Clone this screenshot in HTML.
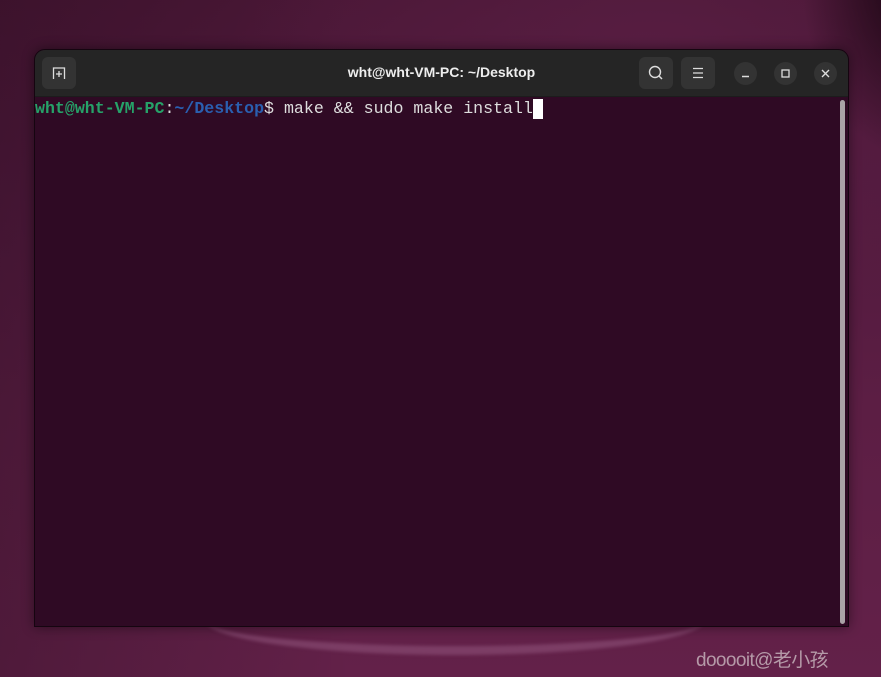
<!DOCTYPE html>
<html><head><meta charset="utf-8"><style>
*{margin:0;padding:0;box-sizing:border-box}
body{width:881px;height:677px;overflow:hidden;position:relative;font-family:"Liberation Sans",sans-serif;
background:linear-gradient(180deg,#4a1736 0%,#521a3e 30%,#5c1e44 60%,#632149 100%)}
.tint{position:absolute;inset:0;background:radial-gradient(ellipse 600px 400px at 650px 60px,rgba(110,40,85,.35),rgba(0,0,0,0) 70%),linear-gradient(90deg,rgba(20,5,15,.25),rgba(0,0,0,0) 40%)}
.glow{position:absolute;left:205px;top:585px;width:500px;height:70px;border-radius:50%;border-bottom:9px solid rgba(150,90,130,.5);filter:blur(1.5px)}
.dark{position:absolute;right:-60px;top:-40px;width:140px;height:200px;background:radial-gradient(ellipse at 80% 10%,#1a0612,rgba(30,8,20,0) 70%)}
.win{position:absolute;left:34px;top:49px;width:815px;height:578px;border-radius:11px 11px 0 0;background:#2f0a24;box-shadow:0 0 12px rgba(0,0,0,.45);overflow:hidden;border:1px solid #150510}
.tb{position:absolute;left:0;top:0;width:100%;height:47px;background:#252525;border-bottom:1px solid #1c1c1c}
.btn{position:absolute;top:7px;width:34px;height:32px;border-radius:6px;background:#333}
.circ{position:absolute;top:12px;width:23px;height:23px;border-radius:50%;background:#333}
.title{position:absolute;left:0;width:100%;top:14px;text-align:center;color:#eee;font-weight:bold;font-size:14px;font-family:"Liberation Sans",sans-serif}
.term{position:absolute;left:0;top:48px;font-family:"Liberation Mono",monospace;font-size:16.6px;line-height:20px;color:#ddd;white-space:pre;padding-top:1px}
.g{color:#26a269;font-weight:bold}.b{color:#2a5fb0;font-weight:bold}
.cur{display:inline-block;width:10px;height:20px;background:#fff;vertical-align:top}
.sb{position:absolute;right:3px;top:50px;width:5px;height:524px;border-radius:3px;background:#a9a2a6}
.wm{position:absolute;left:696px;top:645px;color:#b59aa8;font-size:19px;letter-spacing:-0.6px;font-family:"Liberation Sans","Noto Sans CJK SC",sans-serif}
</style></head><body>
<div class="tint"></div><div class="dark"></div><div class="glow"></div>
<div class="win">
<div class="tb">
<div class="btn" style="left:7px"><svg width="34" height="32"><path d="M11.5 22V11h11v11M17 14v6M14 17h6" stroke="#ddd" stroke-width="1.3" fill="none"/></svg></div>
<div class="title">wht@wht-VM-PC: ~/Desktop</div>
<div class="btn" style="left:604px"><svg width="34" height="32"><circle cx="16" cy="15" r="5.5" stroke="#ddd" stroke-width="1.4" fill="none"/><path d="M20 19l3 3" stroke="#ddd" stroke-width="1.5"/></svg></div>
<div class="btn" style="left:646px"><svg width="34" height="32"><path d="M12 11.5h10M12 16h10M12 20.5h10" stroke="#ddd" stroke-width="1.3"/></svg></div>
<div class="circ" style="left:699px"><svg width="23" height="23"><path d="M8 14.5h7" stroke="#ddd" stroke-width="1.4"/></svg></div>
<div class="circ" style="left:739px"><svg width="23" height="23"><rect x="8" y="8" width="7" height="7" stroke="#ddd" stroke-width="1.3" fill="none"/></svg></div>
<div class="circ" style="left:779px"><svg width="23" height="23"><path d="M8 8l7 7M15 8l-7 7" stroke="#ddd" stroke-width="1.4"/></svg></div>
</div>
<div class="term"><span class="g">wht@wht-VM-PC</span>:<span class="b">~/Desktop</span>$ make &amp;&amp; sudo make install<span class="cur"></span></div>
<div class="sb"></div>
</div>
<div class="wm">dooooit@老小孩</div>
</body></html>
